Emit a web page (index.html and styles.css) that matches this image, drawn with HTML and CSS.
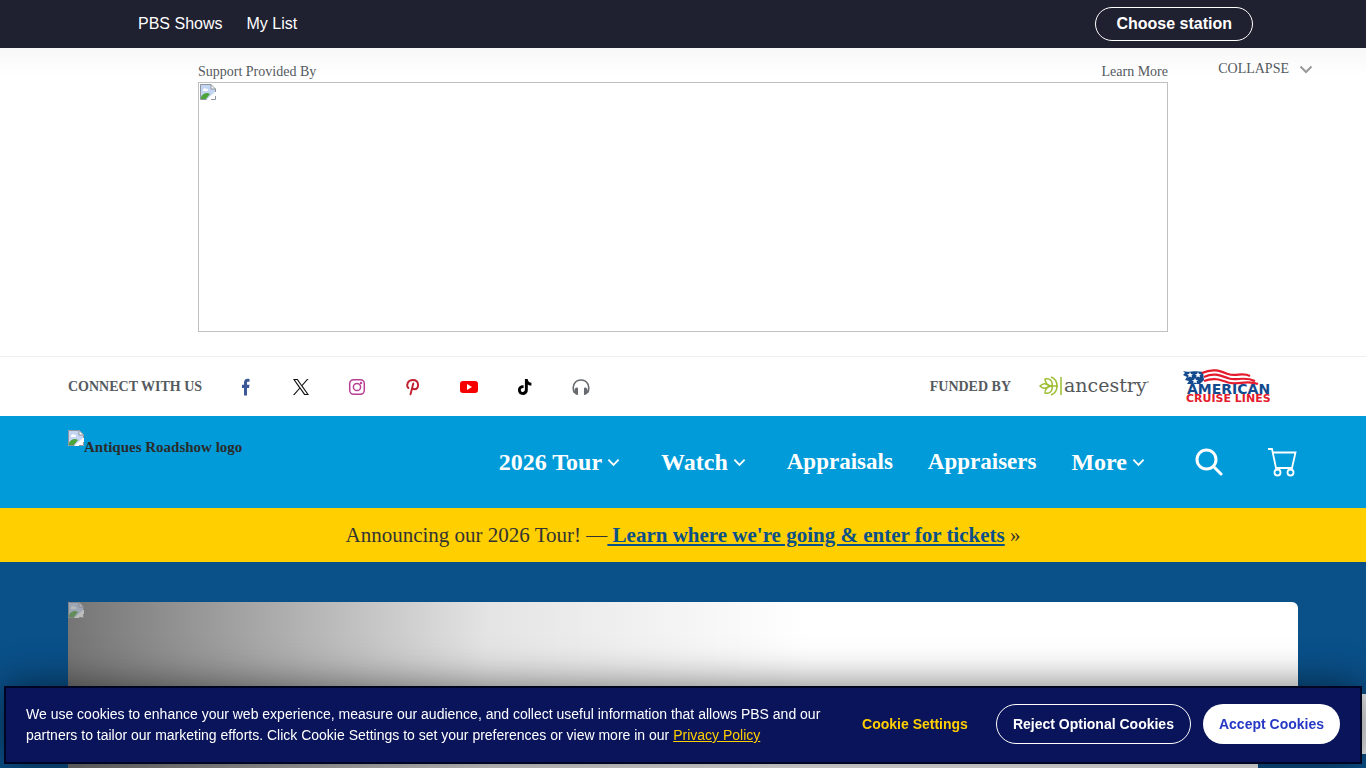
FILE: index.html
```html
<!DOCTYPE html>
<html lang="en">
<head>
<meta charset="utf-8">
<meta name="viewport" content="width=device-width, initial-scale=1">
<title>Antiques Roadshow | PBS</title>
<link rel="stylesheet" href="styles.css">
</head>
<body>
<svg class="sprite" aria-hidden="true">
  <symbol id="missing" viewBox="0 0 16 16">
    <path d="M0 0h11l5 5v11H0z" fill="#fff"/>
    <path d="M1 1h10v4h4v4l-6 6H1z" fill="#c3d5f3"/>
    <path d="M3 6c0-2 3-2 3-1 2-1 3 2 1 2H3z" fill="#fff"/>
    <path d="M1 15v-2c2-4 6-5 9-3l-4 5z" fill="#4ea43c"/>
    <path d="M6 16 16 7v3l-6 6z" fill="#fff"/>
    <path d="M.5 15.500V.5h10.500l4.500 4.500v3M11 .5V5h4.500M.5 15.500h6M11 15.500h4.500V12" fill="none" stroke="#8f959c"/>
  </symbol>
  <symbol id="chevron" viewBox="0 0 14 9"><path d="M1.500 1.500 7 7l5.500-5.500" fill="none" stroke="currentColor" stroke-width="2"/></symbol>
</svg>

<nav class="topbar" aria-label="PBS">
  <div class="topbar-links"><a href="#">PBS Shows</a><a href="#">My List</a></div>
  <button class="station" type="button">Choose station</button>
</nav>

<section class="sponsor">
  <div class="sponsor-frame">
    <div class="sponsor-head"><span>Support Provided By</span><a href="#">Learn More</a></div>
    <div class="sponsor-image"><svg class="missing"><use href="#missing"/></svg></div>
  </div>
  <button class="collapse" type="button">COLLAPSE <svg width="14" height="9"><use href="#chevron"/></svg></button>
</section>

<section class="connect">
  <div class="social">
    <strong>CONNECT WITH US</strong>
    <a href="#" aria-label="Facebook"><svg viewBox="0 0 18 18"><path d="M8 17.500V10H6V6.800h2V4.700C8 2.200 9.400.8 11.600.8c.8 0 1.500.1 1.900.2v2.800h-1.300c-1 0-1.200.5-1.200 1.200v1.800h2.500L13 10h-2v7.500z" fill="#3b5998"/></svg></a>
    <a href="#" aria-label="X"><svg viewBox="0 0 18 18"><path d="M10.500 7.800 16.500 1H15l-5.200 5.900L5.700 1H1l6.200 9L1 17h1.500l5.400-6.200 4.300 6.200H17zM3 2h2l10 14h-2z" fill="#111"/></svg></a>
    <a href="#" aria-label="Instagram"><svg viewBox="0 0 18 18" fill="none" stroke="#b83e95" stroke-width="1.500"><rect x="1.700" y="1.700" width="14.600" height="14.600" rx="4"/><circle cx="9" cy="9" r="3.600"/><circle cx="13" cy="4.900" r=".5" fill="#b83e95"/></svg></a>
    <a href="#" aria-label="Pinterest"><svg viewBox="0 0 18 18" fill="none" stroke="#c0202f" stroke-width="1.900" stroke-linecap="round"><path d="M4.400 10C2 7.500 3.300 2 9 2c6.500 0 6.500 9.300 1.500 9.300-1.200 0-2-.5-2.400-1.300M9.300 5.500 6.500 16.300"/></svg></a>
    <a href="#" aria-label="YouTube"><svg viewBox="0 0 18 18"><rect y="3" width="18" height="12" rx="3" fill="#f60000"/><path d="m7 6 5 3-5 3z" fill="#fff"/></svg></a>
    <a href="#" aria-label="TikTok"><svg viewBox="0 0 18 18"><path d="M8.900 1h2.800c.2 2.200 1.600 3.600 3.700 3.800v2.800c-1.400 0-2.600-.4-3.600-1.200v5.500c0 6.700-9.800 6.700-9.800.2 0-3.300 2.600-5.200 5.600-4.900V10c-1.600-.4-2.800.6-2.800 2 0 2.700 4.100 2.800 4.100-.4z" fill="#000"/></svg></a>
    <a href="#" aria-label="Podcast"><svg viewBox="0 0 18 18"><path d="M2.500 15C-1 7.500 3.500 2 9 2s10 5.500 6.500 13" fill="none" stroke="#666a6e" stroke-width="1.600"/><path d="M3 10.500C4 9 6 9 6 10.500V17c-2 0-3.500-1-4-3zM15 10.500C14 9 12 9 12 10.500V17c2 0 3.500-1 4-3z" fill="#666a6e"/></svg></a>
  </div>
  <div class="funders">
    <strong>FUNDED BY</strong>
    <a href="#" aria-label="Ancestry"><svg width="115" height="32" viewBox="0 0 115 32">
      <g fill="none" stroke="#9cbe30" stroke-width="1.500"><path d="M22 6v18M1 15c3-3 6-3 9 0-3 3-6 3-9 0zM6 8c5-1 8 2 7 7-4 0-7-3-7-7zM6 22c5 1 8-2 7-7-4 0-7 3-7 7zM10 15h9M12 6c8 3 8 15 0 18"/></g>
      <text class="ancestry" x="25" y="21">ancestry</text><circle cx="109" cy="11" r="1" fill="#aaa"/></svg></a>
    <a href="#" aria-label="American Cruise Lines"><svg width="90" height="36" viewBox="0 0 90 36">
      <path d="M1 2c5 2 11-1 20 1l1 8-4 4H5l2-3-4-1 2-3-4-2 2-2z" fill="#134a8e"/>
      <path d="m8 3 1 2 2 .2-1.500 1.300.5 2-2-1-1.800 1 .5-2L5 5.200 7 5zM16 3l1 2 2 .2-1.500 1.300.5 2-2-1-1.800 1 .5-2L13 5.200 15 5zM13 9l1 2 2 .2-1.500 1.300.5 2-2-1-1.800 1 .5-2L10 11.200l2-.2z" fill="#fff"/>
      <g fill="none" stroke="#e31b2d" stroke-width="2.200"><path d="M20 4C31-1 38 2 46 5s14-2 22 2M22 8c11-5 17-1 25 1.500S62 7 73 12M22 12c10-4 17-1 24 1.500 10 3 18-3 30 1.500"/></g>
      <text class="american" x="5" y="25">AMERICAN</text><text class="cruise" x="4" y="33">CRUISE LINES</text></svg></a>
  </div>
</section>

<header class="site-header">
  <a class="logo" href="#"><svg class="missing"><use href="#missing"/></svg><span>Antiques Roadshow logo</span></a>
  <nav class="main-nav" aria-label="Main">
    <a href="#">2026 Tour <svg><use href="#chevron"/></svg></a>
    <a class="watch" href="#">Watch <svg><use href="#chevron"/></svg></a>
    <a class="plain" href="#">Appraisals</a>
    <a class="plain" href="#">Appraisers</a>
    <a href="#">More <svg><use href="#chevron"/></svg></a>
  </nav>
  <button class="icon-button" type="button" aria-label="Search"><svg width="28" height="28" viewBox="0 0 28 28" fill="none" stroke="#fff" stroke-width="3"><circle cx="11.500" cy="11.500" r="9.500"/><path d="m18.500 18.500 7.500 7.500" stroke-linecap="round"/></svg></button>
  <a class="icon-button" href="#" aria-label="Shop"><svg width="30" height="30" viewBox="0 0 30 30" fill="none" stroke="#fff" stroke-width="1.800"><path d="M0 2h4l4 19h16l3.500-15.500H5"/><circle cx="9.500" cy="25.500" r="3"/><circle cx="22.500" cy="25.500" r="3"/></svg></a>
</header>

<p class="announce">Announcing our 2026 Tour! —<a href="#"> Learn where we're going &amp; enter for tickets</a> »</p>

<main class="hero">
  <div class="hero-image"><svg class="missing"><use href="#missing"/></svg></div>
  <div class="hero-body"></div>
</main>

<div class="badge"></div>
<div class="cookies" role="dialog" aria-label="Cookies">
  <p>We use cookies to enhance your web experience, measure our audience, and collect useful information that allows PBS and our partners to tailor our marketing efforts. Click Cookie Settings to set your preferences or view more in our <a href="#">Privacy Policy</a></p>
  <div class="cookie-actions">
    <button class="settings" type="button">Cookie Settings</button>
    <button class="reject" type="button">Reject Optional Cookies</button>
    <button class="accept" type="button">Accept Cookies</button>
  </div>
</div>
</body>
</html>
```
FILE: styles.css
```css
* { box-sizing: border-box; }
body {
  margin: 0;
  min-height: 100vh;
  display: flex;
  flex-direction: column;
  font: 14px/20px "Liberation Serif", "Times New Roman", serif;
  color: #545a60;
  background: #fff;
}
a { color: inherit; text-decoration: none; }
p { margin: 0; }
button { font: inherit; color: inherit; background: none; border: 0; padding: 0; cursor: pointer; }
svg { display: block; flex: none; }
.sprite { position: absolute; width: 0; height: 0; }
.missing { width: 16px; height: 16px; }

.topbar {
  display: flex;
  justify-content: space-between;
  align-items: center;
  height: 48px;
  padding: 0 113px 0 138px;
  background: #1f2030;
  color: #fff;
  font: 16px/24px "Liberation Sans", Arial, sans-serif;
}
.topbar-links { display: flex; gap: 24px; }
.station {
  height: 34px;
  padding: 0 20px;
  border: 1px solid #fff;
  border-radius: 17px;
  font-weight: bold;
}

.sponsor {
  display: grid;
  grid-template-columns: 1fr minmax(0, 970px) 1fr;
  padding: 11px 0 24px;
  border-bottom: 1px solid #eee;
  background: linear-gradient(#f8f8f8, #fff 28px);
}
.sponsor-frame { grid-column: 2; padding-top: 3px; }
.sponsor-head { display: flex; justify-content: space-between; }
.sponsor-image { height: 250px; padding: 1px; border: 1px solid #c0c0c0; }
.collapse { display: flex; align-items: center; gap: 10px; justify-self: end; align-self: start; margin-right: 53px; }
.collapse svg { color: #999; }

.connect {
  display: flex;
  justify-content: space-between;
  align-items: center;
  height: 59px;
  padding: 0 94px 0 68px;
}
.social, .funders { display: flex; align-items: center; }
.social { gap: 38px; }
.social strong { margin-right: -4px; }
.social svg { width: 18px; height: 18px; }
.funders { gap: 28px; }
.ancestry { font: 19px "DejaVu Serif", serif; fill: #54585a; }
.american { font: bold 14px "DejaVu Sans", sans-serif; fill: #134a8e; }
.cruise { font: bold 11px "DejaVu Sans", sans-serif; fill: #e31b2d; }

.site-header {
  display: flex;
  align-items: center;
  height: 92px;
  padding: 0 68px;
  background: #009bd8;
  color: #fff;
}
.logo {
  display: flex;
  align-self: flex-start;
  margin: 14px auto 0 0;
  color: #2b2b2b;
  font-weight: bold;
  font-size: 15px;
}
.logo span { padding-top: 7px; }
.main-nav { display: flex; gap: 35px; font-size: 24px; line-height: 32px; font-weight: bold; }
.main-nav a { display: flex; align-items: center; gap: 5px; }
.main-nav .watch { padding: 0 6px; }
.main-nav .plain { font-size: 23px; }
.main-nav svg { width: 13px; height: 9px; }
.icon-button { margin-left: 45px; }
.main-nav + .icon-button { margin-left: 50px; }

.announce {
  padding: 15px;
  background: #ffcf00;
  color: #333;
  font-size: 21px;
  line-height: 24px;
  text-align: center;
}
.announce a { color: #0a5089; font-weight: bold; text-decoration: underline; }

.hero {
  flex: 1;
  display: flex;
  flex-direction: column;
  padding: 40px 68px 0;
  background: #0a5089;
}
.hero-image {
  height: 130px;
  border-radius: 0 6px 0 0;
  background: linear-gradient(90deg, #757575, #e4e4e4 420px, #fff 740px);
}
.hero-image .missing { opacity: 0.5; }
.hero-body {
  flex: 1;
  margin-right: 40px;
  background: linear-gradient(90deg, #757575, #e4e4e4 420px, #fff 740px);
}

.badge { position: fixed; right: 0; bottom: 14px; width: 70px; height: 60px; background: #eee; }
.cookies {
  position: fixed;
  inset: auto 4px 4px;
  display: flex;
  justify-content: space-between;
  align-items: center;
  gap: 20px;
  min-height: 78px;
  padding: 14px 20px;
  border: 2px solid #000523;
  background: #0a145a;
  box-shadow: 0 0 40px rgba(0, 0, 0, 0.56);
  color: #fff;
  font: 14px/21px "Liberation Sans", Arial, sans-serif;
}
.cookies p { max-width: 800px; }
.cookies p a { color: #ffcf00; text-decoration: underline; }
.cookie-actions { display: flex; gap: 12px; font-weight: bold; padding-bottom: 2px; }
.cookie-actions button { height: 40px; padding: 0 16px; border-radius: 20px; white-space: nowrap; }
.cookie-actions .settings { color: #ffcf00; }
.cookie-actions .reject { border: 1px solid #fff; }
.cookie-actions .accept { background: #fff; color: #2638c4; }
```
